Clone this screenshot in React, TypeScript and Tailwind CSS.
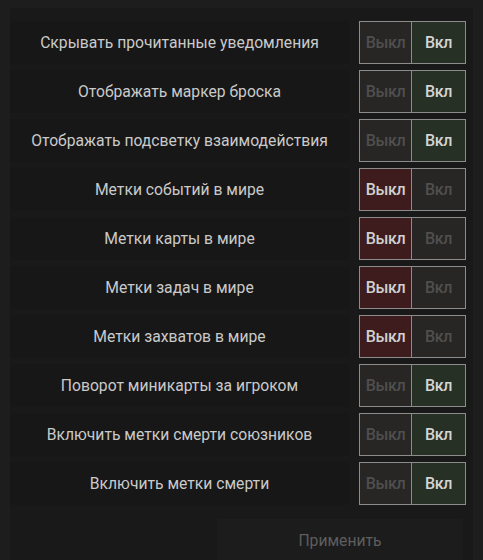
import React, { useState } from 'react';

interface Setting {
  label: string;
  on: boolean;
}

const initial: Setting[] = [
  { label: 'Скрывать прочитанные уведомления', on: true },
  { label: 'Отображать маркер броска', on: true },
  { label: 'Отображать подсветку взаимодействия', on: true },
  { label: 'Метки событий в мире', on: false },
  { label: 'Метки карты в мире', on: false },
  { label: 'Метки задач в мире', on: false },
  { label: 'Метки захватов в мире', on: false },
  { label: 'Поворот миникарты за игроком', on: true },
  { label: 'Включить метки смерти союзников', on: true },
  { label: 'Включить метки смерти', on: true },
];

const Toggle: React.FC<{ on: boolean; onChange: (v: boolean) => void }> = ({ on, onChange }) => (
  <div className="flex w-[107px] h-[43px] border border-[#8c8c8c] text-[16px] font-medium tracking-[-0.4px]">
    <button
      onClick={() => onChange(false)}
      className={`w-[52px] flex items-center justify-center border-r border-[#8c8c8c] ${
        on ? 'bg-[#272624] text-[#4f4f4f]' : 'bg-[#3e1c1d] text-[#d0d0d0]'
      }`}
    >
      Выкл
    </button>
    <button
      onClick={() => onChange(true)}
      className={`flex-1 flex items-center justify-center ${
        on ? 'bg-[#263024] text-[#d4d4d4]' : 'bg-[#272624] text-[#4f4f4f]'
      }`}
    >
      Вкл
    </button>
  </div>
);

export default function App() {
  const [settings, setSettings] = useState(initial);

  const setOne = (idx: number, v: boolean) =>
    setSettings(s => s.map((x, i) => (i === idx ? { ...x, on: v } : x)));

  return (
    <div
      className="w-[483px] h-[560px] bg-[#1d1d1d] pt-[8px] overflow-hidden"
      style={{ fontFamily: '"Roboto", "Liberation Sans", sans-serif' }}
    >
      <div className="mx-[10px] h-full bg-[#191919] pt-[13px]">
        <div className="flex flex-col gap-[6px]">
          {settings.map((s, i) => (
            <div key={s.label} className="flex items-center h-[43px]">
              <div className="w-[339px] h-full bg-[#171717] flex items-center justify-center text-[15.7px] text-[#cacaca]">
                {s.label}
              </div>
              <div className="ml-[10px]">
                <Toggle on={s.on} onChange={v => setOne(i, v)} />
              </div>
            </div>
          ))}
        </div>
        <div className="flex justify-end mt-[14px] pr-[10px]">
          <button className="w-[246px] h-[44px] bg-[#1c1c1c] text-[15.7px] text-[#5e5e5e] flex items-center justify-center">
            Применить
          </button>
        </div>
      </div>
    </div>
  );
}
